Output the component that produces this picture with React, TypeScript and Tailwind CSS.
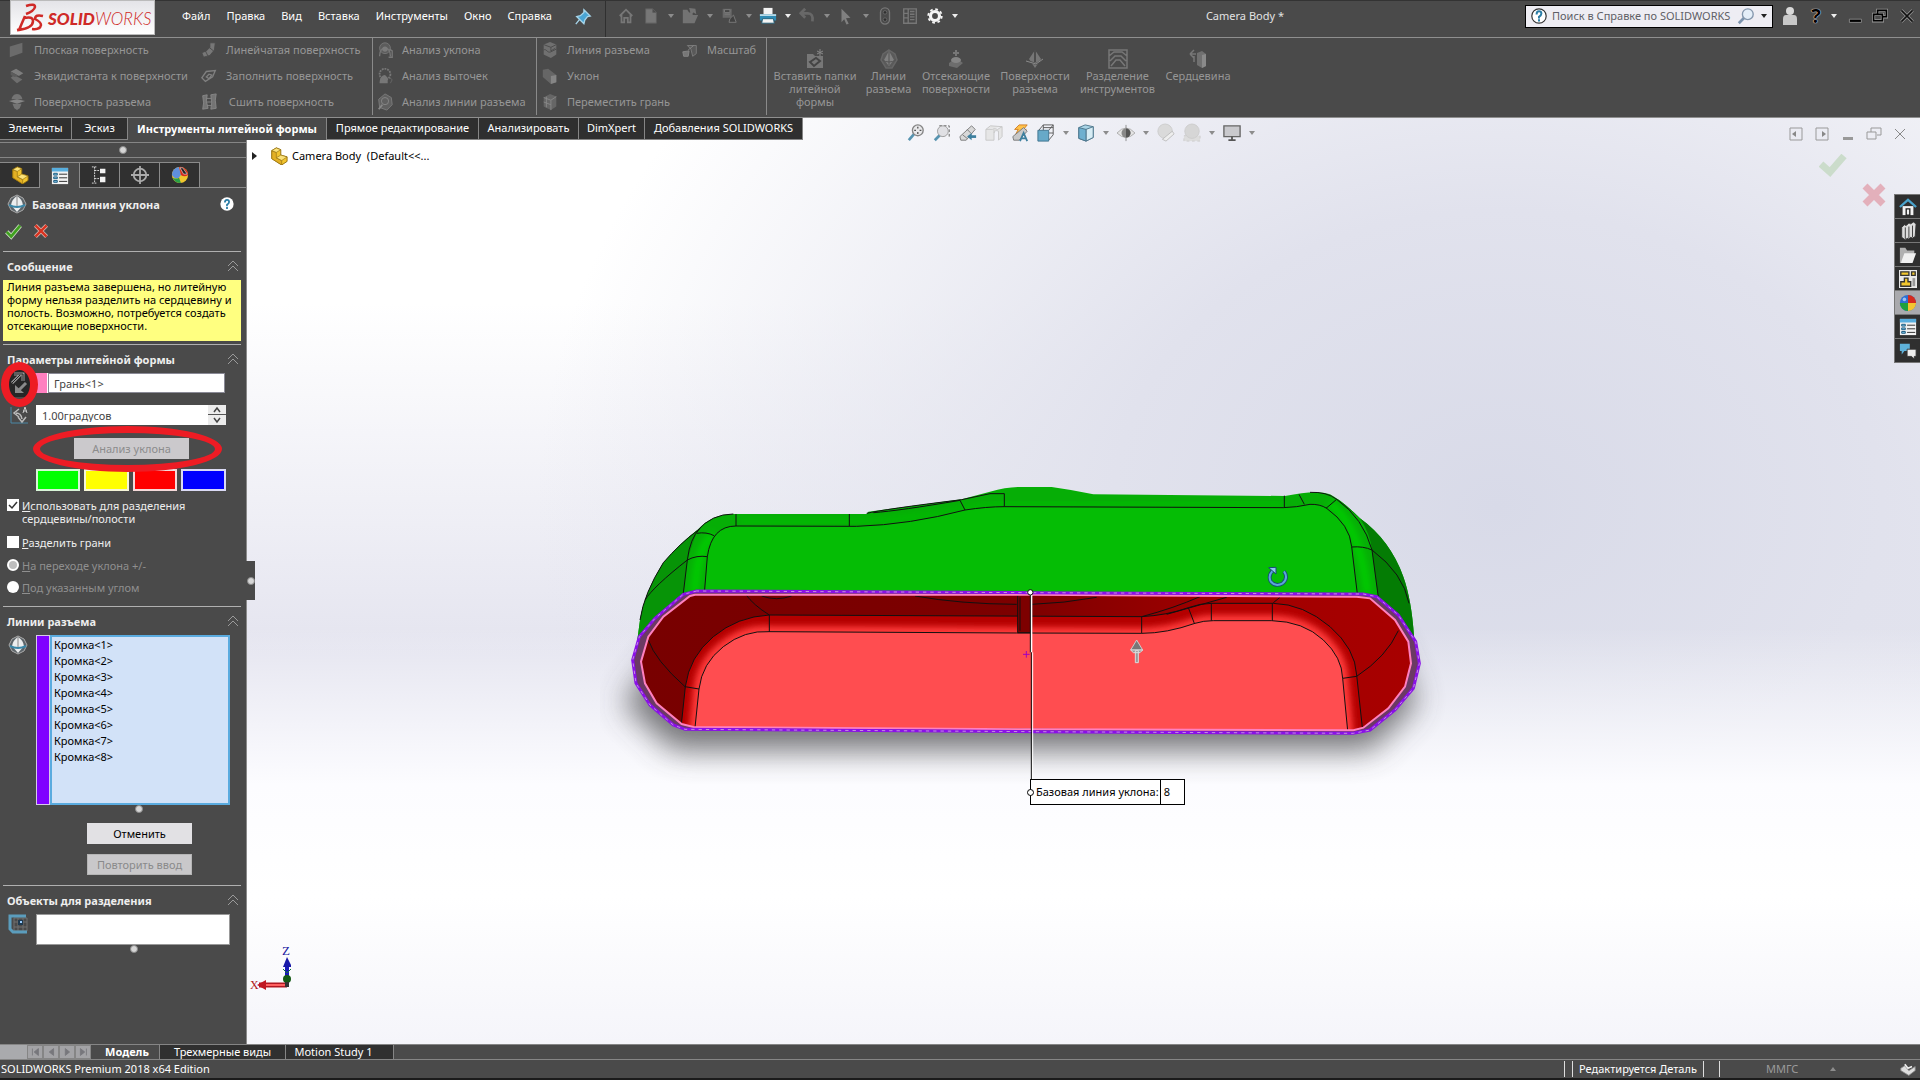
import type { ReactNode } from "react";
import { clsx } from "clsx";

function Icon({ size = 'w-5 h-5', box = '0 0 20 20', children }: { size?: string, box?: string, children: ReactNode })
{
    return <svg viewBox={box} className={clsx(size, 'shrink-0')} fill="none" aria-hidden="true">{children}</svg>;
}

const Caret = ({ color = '#8c8c8c' }: { color?: string }) => (
    <svg viewBox="0 0 6 4" className="w-[6px] h-[4px] shrink-0" aria-hidden="true"><path d="M0 0h6L3 4z" fill={color} /></svg>
);

const Dot = () => <span className="block w-2 h-2 rounded-full bg-[#d6d6d6] border border-[#8a8a8a]" />;

const menu = ['Файл', 'Правка', 'Вид', 'Вставка', 'Инструменты', 'Окно', 'Справка'];

const quickTools = [
    { name: 'Домой', arrow: false, icon: <path d="M3 10 10 3l7 7M5 9v8h3v-5h4v5h3V9" stroke="#777" strokeWidth="2" /> },
    { name: 'Создать', arrow: true, icon: <path d="M4 2h8l4 4v12H4z M12 2v4h4" fill="#777" stroke="#5c5c5c" /> },
    { name: 'Открыть', arrow: true, icon: <path d="M2 3h5l2 3h4v3h6l-4 9H2zM9 1l7 1 1 6-3-2-3 2z" fill="#737373" /> },
    { name: 'Сохранить', arrow: true, icon: <><path d="M3 2h10v10H3z" fill="#686868" /><path d="M5 3h6v3H5zM5 8h6M11 13l4-4 3 8h-8z" fill="#414141" stroke="#7c7c7c" /></> },
    { name: 'Печать', arrow: true, icon: <><path d="M5 1h10v7H5z" fill="#f4f4f4" /><path d="M1 8h18v7H1z" fill="#2f8bb3" /><path d="M1 8h18v2H1z" fill="#b9dbe8" /><path d="M4 13h12l1 5H3z" fill="#f4f4f4" stroke="#1f5d78" /></> },
    { name: 'Отменить', arrow: true, icon: <path d="M4 7h7c4 0 6 3 5 9M8 2 3 7l5 5" stroke="#686868" strokeWidth="3" /> },
    { name: 'Выбрать', arrow: true, icon: <path d="m5 2 10 10-5 .5 3 6-2.500 1-2.500-6L5 17z" fill="#808080" /> },
    { name: 'Перестроить', arrow: false, icon: <><rect x="5" y="1" width="10" height="18" rx="5" fill="#4a4a4a" stroke="#777" strokeWidth="1.500" /><circle cx="10" cy="6" r="2" fill="#2f2f2f" stroke="#6a6a6a" /><circle cx="10" cy="14" r="2" fill="#2f2f2f" stroke="#6a6a6a" /></> },
    { name: 'Свойства файла', arrow: false, icon: <path d="M3 2h14v16H3zM8 2v16M3 7h5M3 12h5M10 5h5M10 8h5M10 11h5M10 14h5" stroke="#777" strokeWidth="1.500" /> },
    { name: 'Настройки', arrow: true, icon: <><circle cx="10" cy="10" r="5" stroke="#f5f5f5" strokeWidth="3.500" /><circle cx="10" cy="10" r="7.500" stroke="#f5f5f5" strokeWidth="2" strokeDasharray="3 2.900" /></> },
];

const shapes: Record<string, ReactNode> = {
    plane: <path d="m2 6 14-4v11L2 18z" fill="#6b6b6b" />,
    offset: <><path d="m3 5 6-3 8 5-5 3z" fill="#7d7d7d" /><path d="m3 12 4-3 9 5-6 4z" fill="#6e6e6e" /><path d="m3 5 9 5-5 1-4-2z" fill="#5c5c5c" /></>,
    parting: <><path d="M10 1c4 0 6 4 6 6H4c0-2 2-6 6-6zM5 12h10l-2 5-3 2-3-2z" fill="#747474" /><path d="m1 9 9-2 9 2-9 3z" fill="#868686" /></>,
    ruled: <path d="M11 2h6l-1 8-5 6-7 2-2-5 5-2 4-4zM6 11l3 6M10 7l5 4" fill="#777" stroke="#4b4b4b" />,
    fill: <path d="m2 12 5-7 10-1-3 7-8 5zM7 11l3-3 3 1-3 4z" stroke="#808080" strokeWidth="1.500" />,
    knit: <path d="M3 3l5-1-1 7 2 8-6 1 1-7zM12 2l6-1-1 7 1 9-6 1 1-7zM7 6h6M7 10h6M8 14h5" fill="#747474" stroke="#888" />,
    draft: <><circle cx="10" cy="8" r="6" fill="#5c5c5c" stroke="#777" /><path d="M4 17c0-5 2-9 6-9s6 3 6 9M15 9l3 2v7h-4" stroke="#777" strokeWidth="1.500" /><circle cx="10" cy="9" r="3" fill="#7b7b7b" /></>,
    undercut: <><circle cx="10" cy="8" r="6" stroke="#777" strokeWidth="2" strokeDasharray="2 1" /><path d="M4 18c0-5 2-9 6-9l3 3v6z" fill="#777" /><path d="m15 12 3 2-2 4" stroke="#666" /></>,
    lineAnalysis: <><path d="m10 1 7 4 1 8-6 6-8-3-1-9z" fill="#606060" stroke="#7d7d7d" /><circle cx="10" cy="9" r="4" stroke="#888" /><path d="m3 18 4-5" stroke="#888" strokeWidth="2" /></>,
    splitLine: <><path d="m3 4 7-3 7 3v11l-6 4-8-4z" fill="#707070" /><path d="m3 4 8 3 6-3M11 7v4l5-3M3 10c3-2 4 4 8 2l6-3" stroke="#494949" /></>,
    wedge: <><path d="m2 3 6-1 9 7v8l-6 2-9-8z" fill="#666" /><path d="m11 10 6-1v8l-6 2z" fill="#858585" /></>,
    moveFace: <><path d="m3 5 7-4 7 3v11l-6 4-8-4z" fill="#666" /><path d="m3 5 8 3 6-4M11 8v11M6 4v12M3 10l8 3" stroke="#888" /></>,
    scale: <><path d="M7 5h10v9l-4 3-2-8z" fill="#595959" stroke="#7d7d7d" /><path d="m2 12 7-1-1 6H3zM8 10l6-5" fill="#777" stroke="#888" /></>,
};

const ribbonGroups = [
    {
        width: 'w-[373px] pl-[8px]', columns: [
            { width: 'w-[192px]', items: [['plane', 'Плоская поверхность'], ['offset', 'Эквидистанта к поверхности'], ['parting', 'Поверхность разъема']] },
            { width: 'w-[172px]', items: [['ruled', 'Линейчатая поверхность'], ['fill', 'Заполнить поверхность'], ['knit', ' Сшить поверхность']] },
        ]
    },
    {
        width: 'w-[164px] pl-[3px]', columns: [
            { width: 'w-[160px]', items: [['draft', 'Анализ уклона'], ['undercut', 'Анализ выточек'], ['lineAnalysis', 'Анализ линии разъема']] },
        ]
    },
    {
        width: 'w-[230px] pl-[4px]', columns: [
            { width: 'w-[140px]', items: [['splitLine', 'Линия разъема'], ['wedge', 'Уклон'], ['moveFace', 'Переместить грань']] },
            { width: 'w-[84px]', items: [['scale', 'Масштаб']] },
        ]
    },
];

const bigTools = [
    { lines: ['Вставить папки', 'литейной', 'формы'], width: 'w-[96px]', icon: <><path d="M2 5h6l2 2h8v12H2z" fill="#777" /><path d="m5 13 6-4 4 3-6 5z" stroke="#444" strokeWidth="2" /><path d="M15 0v7M12 2l6 3M18 2l-6 3" stroke="#888" /></> },
    { lines: ['Линии', 'разъема'], width: 'w-[51px]', icon: <><path d="m10 1 6 4 2 6-5 8H7l-5-8 2-6z" fill="#5a5a5a" stroke="#666" strokeWidth="1.500" /><path d="m10 2 5 9-5 6-5-6z" fill="#808080" /><path d="M3 11q7 4 14 0M10 3v13" stroke="#555" /></> },
    { lines: ['Отсекающие', 'поверхности'], width: 'w-[84px]', icon: <><path d="M10 1v6M7 4h6" stroke="#777" strokeWidth="2" /><path d="m3 14 7-5 7 5-6 5-8-2z" fill="#6d6d6d" /><ellipse cx="10" cy="11" rx="5" ry="3" fill="#858585" /></> },
    { lines: ['Поверхности', 'разъема'], width: 'w-[74px]', icon: <><path d="m10 1 6 9-6 9-6-9z" fill="#777" /><path d="m2 12 9 3 7-4M10 1v12" stroke="#4d4d4d" strokeWidth="2" /><path d="m1 12 10 3 7-5" stroke="#8a8a8a" /></> },
    { lines: ['Разделение', 'инструментов'], width: 'w-[91px]', icon: <path d="M1 1h18v18H1zM1 7l5-4h8l5 4M2 12l5-5h6l5 5M3 17l5-6h4l5 6" stroke="#777" strokeWidth="1.500" /> },
    { lines: ['Сердцевина'], width: 'w-[70px]', icon: <><path d="m9 4 5-2 4 3v12l-4 2-5-3z" fill="#707070" /><path d="m14 6 4-1v12l-4 2z" fill="#8a8a8a" /><path d="M8 5H2m0 0 4-4M2 5l4 4M6 7v6" stroke="#777" strokeWidth="1.500" /></> },
];

const commandTabs = [
    { name: 'Элементы', width: 'w-[72px]' },
    { name: 'Эскиз', width: 'w-[56px]' },
    { name: 'Инструменты литейной формы', width: 'w-[199px]' },
    { name: 'Прямое редактирование', width: 'w-[152px]' },
    { name: 'Анализировать', width: 'w-[100px]' },
    { name: 'DimXpert', width: 'w-[66px]' },
    { name: 'Добавления SOLIDWORKS', width: 'w-[158px]' },
];

const viewTools = [
    { name: 'Изменить в размер экрана', arrow: false, icon: <><path d="m2 18 6-7" stroke="#5794b0" strokeWidth="3" /><circle cx="12" cy="7" r="6" fill="#e8e8ea" stroke="#858585" strokeWidth="1.500" /><path d="M12 3v8M8 7h8" stroke="#555" strokeWidth="1.500" strokeDasharray="2 4" /></> },
    { name: 'Увеличить элемент вида', arrow: false, icon: <><path d="M7 2h11v12" stroke="#555" strokeDasharray="3 2" /><path d="m2 18 6-6" stroke="#5794b0" strokeWidth="3" /><circle cx="11" cy="8" r="6" fill="#e0e0e4" stroke="#999" /></> },
    { name: 'Предыдущий вид', arrow: false, icon: <><path d="m1 14 13-12 4 4L8 18H2z" fill="#d8d8d8" stroke="#777" /><path d="m9 6 5 5M4 12l5 4" stroke="#777" /><path d="M19 14h-6" stroke="#3d7f9e" strokeWidth="3" /><path d="m14 10-5 4 5 4z" fill="#3d7f9e" /></> },
    { name: 'Разрез', arrow: false, icon: <path d="m1 6 5-4 13 1v11l-4 4V8q-4-2-5 2v8H1zM1 6h7q2-2 6 0l5-3M10 10V6" fill="#e6e6e6" stroke="#c6c6c6" /> },
    { name: 'Динамические виды примечаний', arrow: false, icon: <><path d="M9 1h9l-4 5h3L5 12l3-6H4z" fill="#ffc24a" stroke="#d07a20" /><path d="m2 14 12-10 4 4-9 10H3z" fill="#c8c8c8" stroke="#777" /><path d="m10 19 4-9 4 9m-7-3h6" stroke="#3d7f9e" strokeWidth="2" /></> },
    { name: 'Ориентация видов', arrow: true, icon: <><path d="M2 7 7 1h11v11l-5 6M7 1v6m0-3h11M13 7l5-6M13 10h5" stroke="#555" /><path d="M1 7h12v12H1z" fill="#67a9c8" stroke="#3c718c" /></> },
    { name: 'Стиль отображения', arrow: true, icon: <><path d="m2 4 7-3 9 2v12l-8 4-8-3z" fill="#a8d3e5" stroke="#4a7389" /><path d="m10 6 8-3v12l-8 4z" fill="#d8edf5" stroke="#4a7389" /><path d="m2 4 8 2v13l-8-3z" fill="#6fb0cf" stroke="#4a7389" /></> },
    { name: 'Скрыть объекты', arrow: true, icon: <><path d="M0 10q10-11 20 0-10 10-20 0z" fill="#e4e4e4" stroke="#aaa" /><circle cx="10" cy="10" r="5" fill="#888" /><path d="M10 1v18" stroke="#888" /><path d="M10 5a5 5 0 0 1 0 10z" fill="#555" /></> },
    { name: 'Редактировать внешний вид', arrow: false, icon: <><circle cx="9" cy="8" r="8" fill="#dadada" stroke="#ccc" /><path d="m6 17 11-9 2 3-9 8z" fill="#eee" stroke="#bbb" /></> },
    { name: 'Применить сцену', arrow: true, icon: <><path d="M1 13h18v6H1z" fill="#ddd" stroke="#ccc" strokeDasharray="3 3" /><circle cx="10" cy="8" r="8" fill="#d6d6d6" stroke="#ccc" /></> },
    { name: 'Настройка вида', arrow: true, icon: <><path d="M1 2h18v12H1z" fill="#c9c9cd" stroke="#666" strokeWidth="1.500" /><path d="M10 14v4M6 18h8" stroke="#555" strokeWidth="2" /></> },
];

const Part = () => (
    <>
        <path d="m2 4 5-3 5 2v6l7 2v5l-6 4L2 13z" fill="#f2c42f" stroke="#8f6c0c" />
        <path d="m2 4 5 2v6l6 3v5L2 13z" fill="#e3b024" stroke="#8f6c0c" strokeWidth=".7" />
        <path d="m2 4 5-3 5 2-5 3zM7 12l5-3 7 2-6 4z" fill="#fbe27a" stroke="#8f6c0c" strokeWidth=".7" />
    </>
);

const ListSheet = () => (
    <>
        <path d="M1 1h18v18H1z" fill="#f2f2f2" />
        <path d="M1 1h18v4H1z" fill="#58aede" />
        <path d="M3 7h4v2H3zM3 11h4v2H3zM3 15h4v2H3z" fill="#7cc3e6" stroke="#17567a" />
        <path d="M9 8h9M9 12h9M9 16h9" stroke="#222" />
    </>
);

const Ball = () => (
    <>
        <circle cx="10" cy="10" r="9" fill="#2d6fd2" />
        <path d="M10 1a9 9 0 0 1 9 9h-9z" fill="#d52b1e" />
        <path d="M19 10a9 9 0 0 1-9 9v-9z" fill="#f4c430" />
        <path d="M10 19a9 9 0 0 1-9-9h9z" fill="#1ea03c" />
        <circle cx="6" cy="6" r="2" fill="#b6d3ff" opacity=".8" />
    </>
);

const Lens = () => (
    <>
        <path d="m10 1 6 3 3 6-3 6-6 3-6-3-3-6 3-6z" fill="#5d6469" stroke="#aaa" />
        <path d="M10 2q5 3 6 9l-6 7-6-7q1-6 6-9z" fill="#eceeef" />
        <path d="M2 11q8 4 16 0" stroke="#3a87a8" strokeWidth="2" />
        <path d="M10 2v10" stroke="#888" />
    </>
);

const panelTabs = [
    { name: 'Дерево', icon: <Part /> },
    { name: 'Свойства', icon: <ListSheet /> },
    { name: 'Конфигурации', icon: <><path d="M4 1v18M4 5h6M4 14h6M1 1h5M1 19h5" stroke="#e6e6e6" strokeDasharray="2 1" /><path d="M10 3h6v5h-6zM10 12h6v6h-6z" fill="#f2f2f2" /></> },
    { name: 'Размеры', icon: <><circle cx="10" cy="10" r="7" stroke="#ababab" strokeWidth="2" /><path d="M10 0v20M0 10h20" stroke="#ababab" strokeWidth="2" /></> },
    { name: 'Отображение', icon: <><circle cx="10" cy="10" r="9" fill="#f0c62e" /><path d="M1 10a9 9 0 0 1 8-9l2 9-3 4q-5 0-7-4z" fill="#5f8fdc" /><path d="M2 13q4 2 7 0l2 6Q4 19 2 13z" fill="#2aa046" /><path d="M9 1a9 9 0 0 1 10 9q-4 3-8 0z" fill="#d52b1e" /><path d="m10 2 3 0 5 7-4 0z" fill="#222" stroke="#ddd" strokeWidth=".7" /></> },
];

const taskPane = [
    { name: 'Ресурсы', icon: <><path d="M4 9h12v10H4z" fill="#f2f2f2" /><path d="m1 10 9-8 9 8" stroke="#49a3cc" strokeWidth="2.500" /><path d="M8 12h4v7H8z" stroke="#222" strokeWidth="1.500" /></> },
    { name: 'Библиотека', icon: <path d="m3 6 3-3 2 1 3-3 2 1 3-2 3 2-1 14-3 2-2-1-2 2-2-1-2 2-4-3zM7 6v13M11 5v13M15 4v13" fill="#ddd" stroke="#333" /> },
    { name: 'Проводник', icon: <><path d="M1 2h6l2 3h8v4L5 19H1z" fill="#b0b0b0" /><path d="M6 8h13l-4 11H2z" fill="#f0f0f0" /></> },
    { name: 'Палитра видов', icon: <><path d="M0 0h20v20H0z" fill="#e9e9e9" /><path d="M2 2h9v4H2zM14 2h4v4h-4zM2 13h4V9h4v4h3v5H2z" fill="#f2c72e" stroke="#333" strokeWidth="1.500" /><path d="M15 9h3v9h-3z" fill="#999" /></> },
    { name: 'Внешние виды', icon: <Ball /> },
    { name: 'Свойства', icon: <ListSheet /> },
    { name: 'Форум', icon: <><path d="M1 2h11v8H6l-3 4v-4H1z" fill="#5fb2da" /><path d="M9 8h10v8h-2v3l-3-3H9z" fill="#eee" stroke="#333" /></> },
];

const edges = ['Кромка<1>', 'Кромка<2>', 'Кромка<3>', 'Кромка<4>', 'Кромка<5>', 'Кромка<6>', 'Кромка<7>', 'Кромка<8>'];

function TitleBar()
{
    return (
        <header className="flex items-center h-[38px] shrink-0 border-t border-[#333] border-b border-b-[#8f8f8f] text-white">
            <div className="self-start relative z-10 ml-[10px] w-[145px] h-[34px] bg-[#4a4a4a]">
                <div className="absolute left-0 -top-px w-[145px] h-[35px] flex items-center gap-1 pl-[5px] bg-gradient-to-b from-[#e4e4e8] to-white border border-[#bbb]">
                    <svg viewBox="0 0 28 30" className="w-7 h-[30px] shrink-0" fill="none" stroke="#cf2a27" strokeWidth="2.500" aria-label="DS">
                        <path d="M10 3q9-3 9 1-1 4-9 7" />
                        <path d="M9 13 3 27q14-2 14-9 0-5-9-3M1 27l5-1" />
                        <path d="M27 13q-8-2-8 3 6 3 6 6-1 5-9 4" />
                    </svg>
                    <span className="text-[17px] italic font-black text-[#cf2a27] font-['Lato',sans-serif] leading-none pt-px">SOLID<span className="font-light">WORKS</span></span>
                </div>
            </div>
            <nav className="flex gap-4 ml-[27px] pb-3 pt-[6px] text-[11px] leading-4">
                {menu.map((item) => <button key={item} type="button">{item}</button>)}
            </nav>
            <div className="flex items-center self-stretch w-[36px] ml-[18px] pl-[4px] pb-1 border-r border-[#303030]">
                <Icon size="w-[18px] h-[18px]"><path d="m11 2 7 7-3 .5-3 4-1 4-8-8 4-1 4-3.500zM6 13l-4 5" fill="#4aa5d4" stroke="#a5d3e8" strokeWidth="1.500" /></Icon>
            </div>
            <div className="flex items-center ml-[11px] gap-[7px] pb-[6px]">
                {quickTools.map((tool) => (
                    <button key={tool.name} type="button" aria-label={tool.name} className="flex items-center gap-2">
                        <Icon size="w-[18px] h-[18px]">{tool.icon}</Icon>
                        {tool.arrow && <Caret color={tool.name === 'Печать' || tool.name === 'Настройки' ? '#eee' : '#8c8c8c'} />}
                    </button>
                ))}
            </div>
            <span className="ml-auto mr-[241px] pb-[6px] text-[11px] text-[#e3e3e3]">Camera Body *</span>
            <label className="flex items-center w-[248px] h-[23px] mb-[6px] px-[5px] bg-[#eeedf3] border border-black">
                <Icon size="w-4 h-4"><circle cx="10" cy="10" r="9" fill="#fff" stroke="#333" strokeWidth="1.500" /><path d="M7 8q0-4 3-4t3 3q0 2-3 4v2M10 14v3" stroke="#2b7da6" strokeWidth="2.500" /></Icon>
                <input aria-label="Поиск в справке" placeholder="Поиск в Справке по SOLIDWORKS" className="flex-1 min-w-0 ml-[5px] text-[11px] placeholder:text-[#5f5f66] outline-none" />
                <Icon size="w-[18px] h-[18px]"><path d="m2 18 6-6" stroke="#7b93ad" strokeWidth="3" /><circle cx="12" cy="8" r="6" fill="#e4eef8" stroke="#8497ad" strokeWidth="1.500" /></Icon>
                <span className="ml-[6px]"><Caret color="#222" /></span>
            </label>
            <div className="flex items-center pb-[6px] ml-[7px] mr-[5px]">
                <Icon><circle cx="10" cy="5" r="4" fill="#d8d8d8" /><path d="M3 19v-6q0-4 3-4h8q3 0 3 4v6z" fill="#c8c8c8" /></Icon>
                <span className="w-7 pl-1 text-center text-xl leading-5 font-bold text-black [text-shadow:0_0_1px_#fff,0_0_1px_#fff]">?</span>
                <span className="mx-[3px]"><Caret color="#eee" /></span>
                <button type="button" aria-label="Свернуть" className="ml-[7px]"><Icon size="w-4 h-4"><path d="M3 14h15v4H3z" fill="#000" stroke="#999" /></Icon></button>
                <button type="button" aria-label="Восстановить" className="ml-[9px]"><Icon size="w-4 h-4"><path d="M7 8V3h11v8h-5M2 8h11v8H2z" stroke="#999" strokeWidth="4" /><path d="M7 8V3h11v8h-5M2 8h11v8H2z" stroke="#000" strokeWidth="2" /></Icon></button>
                <button type="button" aria-label="Закрыть" className="ml-[11px]"><Icon size="w-4 h-4"><path d="m3 3 14 14M17 3 3 17" stroke="#999" strokeWidth="4" /><path d="m3 3 14 14M17 3 3 17" stroke="#111" strokeWidth="2" /></Icon></button>
            </div>
        </header>
    );
}

function Ribbon()
{
    return (
        <section className="flex h-20 shrink-0 border-b border-[#8f8f8f] text-[11px] text-[#969696]">
            {ribbonGroups.map((group, i) => (
                <div key={i} className={clsx('flex shrink-0 h-[77px] border-r border-[#8a8a8a]', group.width)}>
                    {group.columns.map((column, j) => (
                        <div key={j} className={clsx('shrink-0 -mt-px', column.width)}>
                            {column.items.map(([shape, name]) => (
                                <button key={name} type="button" className="flex items-center gap-[8px] h-[26px] whitespace-pre">
                                    <Icon size="w-[18px] h-[18px]">{shapes[shape]}</Icon>
                                    {name}
                                </button>
                            ))}
                        </div>
                    ))}
                </div>
            ))}
            {bigTools.map((tool) => (
                <button key={tool.lines[0]} type="button" className={clsx('flex flex-col items-center shrink-0 pt-[11px] leading-[13px]', tool.width)}>
                    <Icon>{tool.icon}</Icon>
                    {tool.lines.map((line) => <span key={line} className="whitespace-nowrap">{line}</span>)}
                </button>
            ))}
        </section>
    );
}

function CommandTabs()
{
    return (
        <div className="flex items-start h-[22px] shrink-0 relative z-10">
            <div className="flex shrink-0 h-[22px] text-[11px] text-white">
                {commandTabs.map((tab, i) => (
                    <button key={tab.name} type="button" className={clsx('shrink-0 whitespace-nowrap border-r border-[#858585]', tab.width, i === 2 ? 'bg-[#4a4a4a] font-bold' : 'bg-[#2f2f2f] border-b')}>{tab.name}</button>
                ))}
            </div>
            <div className="flex items-center ml-[104px] mt-[5px] gap-2">
                {viewTools.map((tool) => (
                    <button key={tool.name} type="button" aria-label={tool.name} className="flex items-center gap-2">
                        <Icon size="w-[18px] h-5">{tool.icon}</Icon>
                        {tool.arrow && <Caret />}
                    </button>
                ))}
            </div>
            <div className="flex items-center gap-[10px] ml-auto mr-3 mt-2">
                <Icon size="w-4 h-4" box="0 0 16 16"><path d="M2 2h12v12H2z" stroke="#999" /><path d="m4 8 4-3v6z" fill="#888" /></Icon>
                <Icon size="w-4 h-4" box="0 0 16 16"><path d="M2 2h12v12H2z" stroke="#999" /><path d="m12 8-4-3v6z" fill="#888" /></Icon>
                <Icon size="w-4 h-4" box="0 0 16 16"><path d="M3 11h10v3H3z" fill="#999" /></Icon>
                <Icon size="w-4 h-4" box="0 0 16 16"><path d="M5 6V2h10v7h-4M1 6h9v7H1z" stroke="#999" /></Icon>
                <Icon size="w-4 h-4" box="0 0 16 16"><path d="m3 3 10 10M13 3 3 13" stroke="#888" /></Icon>
            </div>
        </div>
    );
}

function Section({ title, children }: { title: string, children: ReactNode })
{
    return (
        <section className="ml-[3px] mr-[5px] border-t border-[#b0b0b0]">
            <h3 className="flex items-center justify-between h-7 pl-1 pr-[2px] text-[11px] font-bold text-[#eee]">
                {title}
                <Icon size="w-3 h-3" box="0 0 12 12"><path d="m1 6 5-5 5 5M1 11l5-5 5 5" stroke="#9a9a9a" /></Icon>
            </h3>
            {children}
        </section>
    );
}

function PropertyPanel()
{
    return (
        <aside className="relative flex flex-col shrink-0 w-[247px] bg-[#4a4a4a] border-r border-[#8a8a8a] text-[11px] leading-[13px] text-[#eee]">
            <div className="flex items-center justify-center h-[16px] mt-[2px] border-y border-[#858585]"><Dot /></div>
            <div className="flex h-[26px] mt-[4px]">
                {panelTabs.map((tab, i) => (
                    <button key={tab.name} type="button" aria-label={tab.name} className={clsx('flex items-center justify-center w-10 border-r border-t border-[#8a8a8a]', i !== 1 && 'bg-[#303030] border-b')}>
                        <Icon size="w-[18px] h-[18px]">{tab.icon}</Icon>
                    </button>
                ))}
                <span className="flex-1 border-b border-[#8a8a8a]" />
            </div>
            <div className="flex items-center h-8 pl-[7px] pr-[12px]">
                <Icon>{<Lens />}</Icon>
                <h2 className="ml-[5px] text-[11px] font-bold">Базовая линия уклона</h2>
                <button type="button" aria-label="Справка" className="ml-auto"><Icon size="w-[14px] h-[14px]"><circle cx="10" cy="10" r="9.500" fill="#fff" /><path d="M7 8q0-4 3-4t3 3q0 2-3 4v2M10 14v3" stroke="#2b7da6" strokeWidth="2.500" /></Icon></button>
            </div>
            <div className="flex gap-[11px] h-[31px] pt-[2px] pl-[4px]">
                <button type="button" aria-label="ОК" className="h-[18px]"><Icon size="w-[18px] h-[18px]"><path d="m3 11 5 5L18 4" stroke="#c8d8c0" strokeWidth="5" /><path d="m3 11 5 5L18 4" stroke="#3fa01e" strokeWidth="3" /></Icon></button>
                <button type="button" aria-label="Отмена" className="h-[18px]"><Icon size="w-4 h-4"><path d="m3 3 14 14M17 3 3 17" stroke="#d8b8b4" strokeWidth="5" /><path d="m3 3 14 14M17 3 3 17" stroke="#d8321f" strokeWidth="3" /></Icon></button>
            </div>

            <Section title="Сообщение">
                <p className="h-[61px] mb-[3px] px-1 bg-[#ffff80] text-black whitespace-nowrap">Линия разъема завершена, но литейную<br />форму нельзя разделить на сердцевину и<br />полость. Возможно, потребуется создать<br />отсекающие поверхности.</p>
            </Section>

            <Section title="Параметры литейной формы">
                <div className="flex flex-col h-[233px] pl-[1px]">
                    <div className="flex items-center h-[20px]">
                        <button type="button" aria-label="Реверс направления" className="flex items-center justify-center w-[26px] h-7 ml-[2px] bg-[#262626]"><Icon size="w-5 h-6" box="0 0 20 24"><path d="M3 12 11 4M5 3h9v7" stroke="#999" strokeWidth="3" /><path d="M3 12 11 4M5 3h9v7" stroke="#222" /><path d="m17 12-7 7" stroke="#8a8a8a" strokeWidth="3" /><path d="M6 14v8h9z" fill="#8a8a8a" /></Icon></button>
                        <span className="w-[15px] h-5 ml-[1px] bg-[#ff80c0] border-r border-white" />
                        <input aria-label="Направление съема" defaultValue="Грань<1>" className="w-[177px] h-5 pl-[5px] bg-white border border-[#8a8a96] text-[#444]" />
                    </div>
                    <div className="flex mt-[12px]">
                        <span className="ml-[5px]"><Icon><path d="M2 2v16h17" stroke="#4b87a5" /><path d="M7 8q5 0 6 6M10 4 5 8l5 4M9 12l4 5 4-5" stroke="#bbb" strokeWidth="1.500" /><path d="m14 8 2-6 2 6m-4-2h4" stroke="#ccc" /></Icon></span>
                        <label className="flex w-[190px] h-5 ml-[7px] bg-white">
                            <input aria-label="Угол уклона" defaultValue="1.00градусов" className="w-[172px] pl-[6px] text-[#444]" />
                            <span className="flex flex-col w-[18px] bg-[#ececec]">
                                <button type="button" aria-label="Больше" className="flex justify-center items-center h-[10px] border-b border-[#555]"><Icon size="w-2 h-2" box="0 0 8 8"><path d="m1 6 3-4 3 4" stroke="#444" strokeWidth="1.500" /></Icon></button>
                                <button type="button" aria-label="Меньше" className="flex justify-center items-center h-[10px]"><Icon size="w-2 h-2" box="0 0 8 8"><path d="m1 2 3 4 3-4" stroke="#444" strokeWidth="1.500" /></Icon></button>
                            </span>
                        </label>
                    </div>
                    <button type="button" disabled className="w-[115px] h-[21px] ml-[70px] mt-[13px] bg-[#cbc9cc] text-[#8c8c8c]">Анализ уклона</button>
                    <div className="flex gap-1 ml-[32px] mt-[10px]">
                        <button type="button" aria-label="Положительный уклон" className="w-[44px] h-[22px] bg-[#00ff00] border-2 border-[#d8f5d8]" />
                        <button type="button" aria-label="Без уклона" className="w-[45px] h-[22px] bg-[#ffff00] border-2 border-[#f5f5d8]" />
                        <button type="button" aria-label="Отрицательный уклон" className="w-[44px] h-[22px] bg-[#ff0000] border-2 border-[#f5dada]" />
                        <button type="button" aria-label="Поперечный уклон" className="w-[45px] h-[22px] bg-[#0000ff] border-2 border-[#dadaf5]" />
                    </div>
                    <label className="flex h-[37px] mt-[8px] ml-[3px] gap-[3px]">
                        <input type="checkbox" defaultChecked className="peer sr-only" />
                        <span className="w-3 h-3 bg-white text-transparent peer-checked:text-[#333]"><Icon size="w-3 h-3" box="0 0 12 12"><path d="m2 6 3 3 5-6" stroke="currentColor" strokeWidth="1.500" /></Icon></span>
                        <span><u>И</u>спользовать для разделения<br />сердцевины/полости</span>
                    </label>
                    <label className="flex h-[23px] ml-[3px] gap-[3px]">
                        <input type="checkbox" className="w-3 h-3 appearance-none bg-white" />
                        <span><u>Р</u>азделить грани</span>
                    </label>
                    <label className="flex h-[22px] ml-[3px] gap-[3px] text-[#8f8f8f]">
                        <input type="radio" name="split" disabled className="w-3 h-3 appearance-none rounded-full bg-[#bdbdbd] border-2 border-white" />
                        <span><u>Н</u>а переходе уклона +/-</span>
                    </label>
                    <label className="flex h-[22px] ml-[3px] gap-[3px] text-[#8f8f8f]">
                        <input type="radio" name="split" disabled className="w-3 h-3 appearance-none rounded-full bg-white" />
                        <span><u>П</u>од указанным углом</span>
                    </label>
                </div>
            </Section>

            <Section title="Линии разъема">
                <div className="flex pl-[5px]">
                    <Icon>{<Lens />}</Icon>
                    <div className="flex w-[194px] h-[170px] ml-[8px]">
                        <span className="w-[14px] bg-[#8000ff] border border-[#d8c8e8]" />
                        <ul className="flex-1 pl-[2px] bg-[#d2e2f8] border-2 border-[#5aabdf] text-black">
                            {edges.map((edge) => <li key={edge} className="h-4 leading-[15px]">{edge}</li>)}
                        </ul>
                    </div>
                </div>
                <div className="flex justify-center h-[18px] pl-[34px]"><Dot /></div>
                <div className="flex flex-col items-start gap-[10px] pl-[84px] mb-[10px]">
                    <button type="button" className="w-[105px] h-[21px] bg-[#e2e1e4] text-black">Отменить</button>
                    <button type="button" disabled className="w-[105px] h-[21px] bg-[#c9c8ca] border border-[#b5b5b5] text-[#8a8a8a]">Повторить ввод</button>
                </div>
            </Section>

            <Section title="Объекты для разделения">
                <div className="flex pl-[5px]">
                    <Icon><path d="M6 4h13v13H6zM10 4v13M15 4v13M6 8h13M6 13h13" stroke="#707070" /><path d="M18 2H2v13l3 3h14" stroke="#5b9dbd" strokeWidth="3" /><path d="M10 6h5v5h-5z" fill="#1f3a50" /><path d="M12 7h2v2h-2z" fill="#9cf" /></Icon>
                    <input aria-label="Объекты для разделения" className="w-[194px] h-[31px] ml-[8px] bg-white border border-[#999]" />
                </div>
                <div className="flex justify-center pl-6"><Dot /></div>
            </Section>

            {/* markup over the reverse and draft analysis buttons */}
            <span className="absolute left-[1px] top-[222px] w-[37px] h-[45px] rounded-[50%] border-8 border-[#ed1c24] pointer-events-none" />
            <span className="absolute left-[33px] top-[286px] w-[189px] h-[46px] rounded-[50%] border-[7px] border-[#ed1c24] pointer-events-none" />
            <span className="absolute left-[246px] top-[421px] flex items-center justify-center w-[9px] h-[39px] bg-[#4a4a4a]"><Dot /></span>
        </aside>
    );
}

const lensOuter = 'M290 393 250 403 165 475 118 530 98 600 108 670 150 735 220 795 255 808 1300 815 2260 820 2310 810 2385 750 2440 685 2458 610 2447 545 2395 465 2330 410 2290 402 1290 398z';
const lensInner = 'M285 404 270 408 190 470 145 530 123 605 135 670 170 730 245 792 280 801 1300 808 2260 811 2290 803 2365 745 2415 680 2433 610 2425 545 2385 480 2310 415 2270 410 1290 404z';
const floor = 'M285 803 297 687Q306 610 370 560T508 515L1250 519 1625 520Q1700 520 1785 490 1810 482 1840 482L2015 482Q2110 484 2170 540 2226 592 2228 655L2243 812z';
const rim = 'M243 803 256 680Q268 590 340 530T508 465L1625 470Q1700 466 1765 443 1800 430 1835 430L2020 430Q2110 432 2190 500 2266 566 2270 645L2288 812z';

function Model()
{
    return (
        <svg viewBox="0 0 2580 1110" className="absolute left-[353px] top-[320px] w-[860px] h-[370px]" fill="none" stroke="#111" strokeWidth="3" aria-label="Camera Body">
            <defs>
                <linearGradient id="cavity" x1="0" x2="1"><stop offset="0" stopColor="#780000" /><stop offset=".5" stopColor="#7d0000" /><stop offset=".75" stopColor="#a00000" /><stop offset="1" stopColor="#a80000" /></linearGradient>
                <filter id="shadow" x="-20%" y="-30%" width="140%" height="180%"><feGaussianBlur stdDeviation="46" /></filter>
                <filter id="soft"><feGaussianBlur stdDeviation="10" /></filter>
                <clipPath id="inside"><path d={lensInner} /></clipPath>
                <clipPath id="rimArea"><path d={rim} /></clipPath>
                <clipPath id="body"><path d="M112 540 120 480Q132 400 190 308 240 250 292 210 335 162 400 162L800 162 805 155 1085 118 1170 95Q1220 81 1260 81L1355 81Q1420 90 1480 103L2055 108Q2150 88 2190 103 2230 125 2280 175 2370 240 2410 350 2435 420 2442 530L2300 600 300 600z" /></clipPath>
            </defs>
            <path d="M220 540H2370L2450 730 2310 870H220L70 730z" fill="#4a4a4c" opacity=".75" stroke="none" filter="url(#shadow)" />
            <g clipPath="url(#body)">
                <path d="M0 0h2580v700H0z" fill="#06ae06" stroke="none" />
                <path d="M0 700V0h400L292 210 262 300 250 400V700z" fill="#079407" stroke="none" />
                <path d="M2210 118 2280 175Q2310 220 2316 270L2335 415V700H2580V0z" fill="#047c04" stroke="none" />
                <path d="M340 225Q290 260 285 400M2190 130Q2280 200 2302 400" stroke="#05cc05" strokeWidth="24" filter="url(#soft)" />
                <path d="M420 186H750Q950 180 1200 130L2050 132" stroke="#05bd05" strokeWidth="14" filter="url(#soft)" />
            </g>
            <path d="M313 400 322 290Q335 198 408 198L770 199Q930 194 1095 150 1160 140 1213 140L2050 143Q2090 142 2130 133 2160 132 2180 145 2250 195 2255 260L2273 410z" fill="#05bd05" />
            <path d="M120 480Q132 400 190 308 240 250 292 212 335 162 400 162M135 420Q160 380 262 300M408 162V198M748 162V198M262 300 250 400M262 300Q270 235 300 205M262 300Q290 285 322 290M290 220Q320 215 342 227M800 160Q850 148 1085 119L1170 101H1213V140M820 158Q900 152 1080 121L1095 150M2053 107V143M2097 103 2113 133M2178 145 2210 118M2130 97Q2180 95 2210 118 2290 175 2316 270L2335 412M2255 261Q2290 258 2316 270 2410 340 2427 430" />
            <path d={lensOuter} fill="#6b3a63" stroke="none" />
            <g clipPath="url(#inside)">
                <path d={lensInner} fill="url(#cavity)" stroke="none" />
                <path d={rim} fill="#b40000" />
                <g clipPath="url(#rimArea)"><path d={floor} stroke="#ff3a3a" strokeWidth="34" filter="url(#soft)" /></g>
                <path d={floor} fill="#ff4d50" />
                <path d="M1253 400h42v118h-42z" fill="#7d0000" />
                <path d="M1260 412v100M437 403Q460 435 508 465V516M485 408Q530 424 575 408M945 408Q1080 432 1250 433M1295 433Q1390 430 1490 412M1625 470V520M1625 470Q1720 445 1800 410M1700 463 1880 412M1765 443 1783 490M1834 430V482M2017 430V482M2020 428 2040 412M145 540Q165 600 255 680L297 687M2228 655 2270 649Q2360 590 2395 512" />
            </g>
            <path d={lensInner} stroke="#ff80c0" strokeWidth="6" />
            <path d={lensOuter} stroke="#8a10e8" strokeWidth="9" />
            <path d={lensOuter} stroke="#c890e0" strokeWidth="3" strokeDasharray="10 12" />
            <path d="M1294 405V577" stroke="#fff" strokeWidth="6" />
            <path d="M1291 405V577M1294 577V995" />
            <path d="M1298 577V960" stroke="#fff" />
            <circle cx="1291" cy="397" r="8" fill="#fff" />
            <path d="M1269 583h20M1279 573v20" stroke="#a000c0" />
            <path d="m1610 540 18 30h-36z" fill="#777" stroke="#ccc" />
            <path d="M1592 570h36l-8 8h-20zM1606 572h9v36h-9z" fill="#999" stroke="#ddd" />
            <path d="M2020 330Q2003 346 2012 364 2026 382 2048 370 2066 354 2052 334" stroke="#184b78" strokeWidth="11" />
            <path d="M2020 330Q2003 346 2012 364 2026 382 2048 370 2066 354 2052 334" stroke="#5ba6dc" strokeWidth="6" />
            <path d="m2006 323 22-1v20z" fill="#8cc8ee" stroke="#184b78" />
        </svg>
    );
}

function Viewport()
{
    return (
        <main className="relative flex-1 min-w-0 overflow-hidden">
            <div className="flex items-center pl-[5px] pt-[6px] text-[11px] leading-5 text-black whitespace-pre">
                <svg viewBox="0 0 6 8" className="w-[6px] h-2" aria-hidden="true"><path d="M0 0v8l5-4z" fill="#222" /></svg>
                <span className="ml-[12px] mr-[4px]"><Icon size="w-[18px] h-[18px]"><Part /></Icon></span>
                Camera Body  (Default&lt;&lt;...
            </div>
            <Model />
            <div className="absolute left-[783px] top-[639px] flex items-center h-[26px] border border-black bg-white text-[11px] text-black">
                <span className="-ml-[4px] w-[7px] h-[7px] rounded-full border border-black bg-white" />
                <span className="pl-[2px]">Базовая линия уклона:</span>
                <span className="flex items-center self-stretch w-6 ml-px pl-[3px] border-l border-black">8</span>
            </div>
            <svg viewBox="0 -8 44 54" className="absolute left-0 bottom-[52px] w-11 h-[54px]" aria-label="XYZ">
                <path d="M12 39h28" stroke="#b01822" strokeWidth="5" /><path d="M12 39h28" stroke="#ff6060" strokeWidth="2" />
                <path d="m10 39 9-5v10z" fill="#c01822" />
                <path d="M40 18v14" stroke="#1818b8" strokeWidth="4" /><path d="m40 11 5 10H36z" fill="#1818a8" />
                <path d="M36 23l4 4 4-4" stroke="#107040" fill="none" />
                <circle cx="40" cy="33" r="4" fill="#145a14" /><path d="M38 36h4v5h-4z" fill="#333" />
                <text x="35" y="9" fontSize="13" fill="#1818a0" fontFamily="Liberation Serif, serif">Z</text>
                <text x="3" y="43" fontSize="12" fill="#b01822" fontFamily="Liberation Serif, serif">X</text>
            </svg>
            <div className="absolute right-[31px] top-[14px] w-[70px] h-[56px]">
                <svg viewBox="0 0 70 56" className="w-[70px] h-[56px]" fill="none" aria-hidden="true">
                    <path d="m2 10 9 8L25 2" stroke="#cbdccb" strokeWidth="7" />
                    <path d="m46 32 18 18M64 32 46 50" stroke="#e3b0bb" strokeWidth="7" />
                </svg>
            </div>
            <div className="absolute right-0 top-[54px] flex flex-col w-[26px] bg-[#2f2f2f] border-l border-t border-[#777]">
                {taskPane.map((item, i) => (
                    <button key={item.name} type="button" aria-label={item.name} className={clsx('flex items-center justify-center h-6 border-b border-[#777]', i === 4 && 'bg-[#a9a9ad]')}>
                        <Icon size="w-[18px] h-[18px]">{item.icon}</Icon>
                    </button>
                ))}
            </div>
        </main>
    );
}

export default function App()
{
    return (
        <div className="flex flex-col min-h-screen bg-[#4a4a4a] font-['Noto_Sans',sans-serif] overflow-hidden">
            <TitleBar />
            <Ribbon />
            <div className="flex flex-col flex-1 bg-[linear-gradient(to_bottom,transparent_55%,#fcfcff_72%,#fff_84%,#f5f5fa_100%),radial-gradient(ellipse_50%_80%_at_78%_42%,#d8dae8_0%,#e1e2ed_40%,transparent_100%),linear-gradient(to_bottom,#fff_0%,#fff_20%,#e4e4ef_58%)]">
                <CommandTabs />
                <div className="flex flex-1">
                    <PropertyPanel />
                    <Viewport />
                </div>
            </div>
            <div className="flex h-4 shrink-0 border-y border-[#858585] text-[11px] leading-[12px] text-white">
                <span className="w-[27px] bg-[#a9aaad]" />
                {['M4 3v8M11 3 6 7l5 4z', 'M10 3 5 7l5 4z', 'm5 3 5 4-5 4z', 'm4 3 5 4-5 4zM11 3v8'].map((d) => (
                    <button key={d} type="button" aria-label="Прокрутка вкладок" className="flex justify-center w-4 bg-[#a3a3a6] border border-[#858585]"><Icon size="w-[14px] h-[12px]" box="0 0 14 14"><path d={d} fill="#77777c" stroke="#77777c" /></Icon></button>
                ))}
                <button type="button" className="w-[69px] pl-1 font-bold border-r border-[#858585]">Модель</button>
                <button type="button" className="w-[126px] bg-[#303030] border-r border-[#858585]">Трехмерные виды</button>
                <button type="button" className="w-[108px] pr-3 bg-[#303030] border-r border-[#858585]">Motion Study 1</button>
            </div>
            <footer className="flex items-center h-5 shrink-0 pl-px border-b-2 border-[#1b1b1b] text-[11px] text-white">
                <span>SOLIDWORKS Premium 2018 x64 Edition</span>
                <span className="ml-auto w-[9px] h-4 border-x border-[#ddd]" />
                <span className="w-[130px] text-center">Редактируется Деталь</span>
                <span className="w-[17px] h-4 border-x border-[#ddd]" />
                <span className="w-[110px] pl-[46px] text-[#9a9a9a]">ММГС</span>
                <span className="w-[70px] -scale-y-100"><Caret /></span>
                <Icon size="w-4 h-4"><path d="m1 9 5-3 5 6 8-5v5l-8 6-10-6z" fill="#ddd" stroke="#888" /><path d="m6 4 4 5 5-2" stroke="#eee" strokeWidth="2" /></Icon>
                <span className="w-1" />
            </footer>
        </div>
    );
}
